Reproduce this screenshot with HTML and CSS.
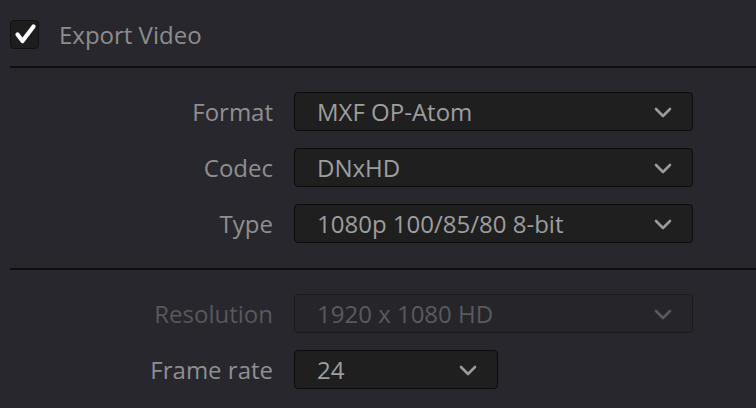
FILE: index.html
```html
<!DOCTYPE html>
<html>
<head>
<meta charset="utf-8">
<link rel="stylesheet" href="styles.css">
</head>
<body>
<div class="panel">
  <div class="header">
    <span class="checkbox">
      <svg width="29" height="29" viewBox="0 0 29 29"><path d="M7.5 14.5 L12.5 21 L23.5 6.5" fill="none" stroke="#ffffff" stroke-width="4.2" stroke-linecap="round" stroke-linejoin="round"/></svg>
    </span>
    <span class="title">Export Video</span>
  </div>
  <div class="sep"></div>
  <div class="section">
    <div class="row">
      <span class="label">Format</span>
      <div class="select wide"><span class="value">MXF OP-Atom</span><svg class="chev" width="18" height="11" viewBox="0 0 18 11"><path d="M2 2 L9 9 L16 2" fill="none" stroke="currentColor" stroke-width="2.6" stroke-linecap="round" stroke-linejoin="round"/></svg></div>
    </div>
    <div class="row">
      <span class="label">Codec</span>
      <div class="select wide"><span class="value">DNxHD</span><svg class="chev" width="18" height="11" viewBox="0 0 18 11"><path d="M2 2 L9 9 L16 2" fill="none" stroke="currentColor" stroke-width="2.6" stroke-linecap="round" stroke-linejoin="round"/></svg></div>
    </div>
    <div class="row">
      <span class="label">Type</span>
      <div class="select wide"><span class="value">1080p 100/85/80 8-bit</span><svg class="chev" width="18" height="11" viewBox="0 0 18 11"><path d="M2 2 L9 9 L16 2" fill="none" stroke="currentColor" stroke-width="2.6" stroke-linecap="round" stroke-linejoin="round"/></svg></div>
    </div>
  </div>
  <div class="sep"></div>
  <div class="section">
    <div class="row disabled">
      <span class="label">Resolution</span>
      <div class="select wide"><span class="value">1920 x 1080 HD</span><svg class="chev" width="18" height="11" viewBox="0 0 18 11"><path d="M2 2 L9 9 L16 2" fill="none" stroke="currentColor" stroke-width="2.6" stroke-linecap="round" stroke-linejoin="round"/></svg></div>
    </div>
    <div class="row">
      <span class="label">Frame rate</span>
      <div class="select narrow"><span class="value">24</span><svg class="chev" width="18" height="11" viewBox="0 0 18 11"><path d="M2 2 L9 9 L16 2" fill="none" stroke="currentColor" stroke-width="2.6" stroke-linecap="round" stroke-linejoin="round"/></svg></div>
    </div>
  </div>
</div>
</body>
</html>
```

FILE: styles.css
```css
html, body {
  margin: 0;
  padding: 0;
  background: #28272d;
}
body {
  width: 756px;
  height: 408px;
  overflow: hidden;
  font-family: "Open Sans", "Noto Sans", sans-serif;
}
.panel {
  padding-top: 20px;
}
.header {
  display: flex;
  align-items: center;
  padding-left: 10px;
  height: 29px;
}
.checkbox {
  width: 27px;
  height: 27px;
  border: 1px solid #111113;
  border-radius: 4px;
  background: #1d1d1f;
  display: flex;
  align-items: center;
  justify-content: center;
}
.checkbox svg {
  flex: none;
}
.title {
  margin-left: 20px;
  font-size: 24px;
  line-height: 29px;
  color: #8d8d8f;
}
.sep {
  margin-left: 10px;
  height: 2px;
  background: #0f0f11;
}
.header + .sep {
  margin-top: 17px;
}
.section {
  display: flex;
  flex-direction: column;
  gap: 17px;
  padding: 24px 0 25px;
}
.row {
  display: flex;
  align-items: center;
  height: 39px;
}
.label {
  width: 273px;
  text-align: right;
  font-size: 24px;
  line-height: 39px;
  color: #8f8f91;
  margin-right: 21px;
}
.select {
  box-sizing: border-box;
  height: 39px;
  border: 1px solid #0c0c0d;
  border-radius: 4px;
  background: #1f1f20;
  display: flex;
  align-items: center;
  justify-content: space-between;
  padding: 0 20px 0 22px;
  color: #9a9a9b;
}
.select.wide {
  width: 399px;
}
.select.narrow {
  width: 204px;
}
.value {
  font-size: 24px;
  line-height: 37px;
  color: #9d9d9e;
}
.chev {
  color: #9a9a9b;
  margin-top: 1px;
}
.disabled .label {
  color: #58585c;
}
.disabled .select {
  background: #262529;
  border-color: #1a1a1d;
}
.disabled .value {
  color: #5a5a5e;
}
.disabled .chev {
  color: #5a5a5e;
}
```
